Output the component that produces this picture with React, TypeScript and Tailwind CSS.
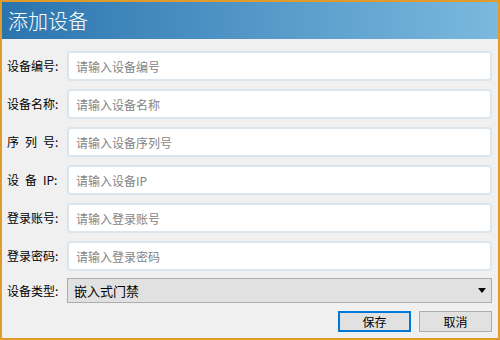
const fields = [
  { label: "设备编号:", placeholder: "请输入设备编号" },
  { label: "设备名称:", placeholder: "请输入设备名称" },
  { label: "序\u2002列\u2002号:", placeholder: "请输入设备序列号" },
  { label: "设\u2002备\u2002IP:", placeholder: "请输入设备IP" },
  { label: "登录账号:", placeholder: "请输入登录账号" },
  { label: "登录密码:", placeholder: "请输入登录密码" },
];

const font = { fontFamily: '"Noto Sans CJK SC", "Liberation Sans", sans-serif' };

export default function App() {
  return (
    <div
      className="w-[500px] h-[340px] border-2 border-[#e09b2a] bg-[#f0f0f0] flex flex-col text-[12px] text-black"
      style={font}
    >
      <div className="h-[37px] shrink-0 bg-gradient-to-r from-[#2a74ae] via-[#5a9ecc] via-60% to-[#7bb9de] flex items-center px-[6px]">
        <span className="text-white text-[20px] font-light leading-none">添加设备</span>
      </div>

      <div className="flex flex-col pl-[5px] pr-[6px] pt-[12px]">
        {fields.map((f) => (
          <div key={f.label} className="flex items-center h-[30px] mb-[8px]">
            <label className="w-[60px] shrink-0 whitespace-pre">{f.label}</label>
            <input
              className="flex-1 h-[30px] rounded-[4px] border-2 border-[#dbe5ee] bg-white px-[7px] outline-none text-[12px] placeholder:text-[#858585]"
              placeholder={f.placeholder}
            />
          </div>
        ))}

        <div className="flex items-center h-[25px] -mt-[1px]">
          <label className="w-[60px] shrink-0">设备类型:</label>
          <div className="flex-1 h-[25px] border border-[#adadad] bg-[#e1e1e1] flex items-center justify-between pl-[6px] pr-[5px]">
            <span className="text-[13px]">嵌入式门禁</span>
            <svg width="8" height="5" viewBox="0 0 8 5">
              <path d="M0 0h8L4 5z" fill="#000" />
            </svg>
          </div>
        </div>

        <div className="flex justify-end gap-[8px] mt-[8px]">
          <button className="w-[73px] h-[21px] border-2 border-[#0078d7] bg-[#e1e1e1] text-[12px] leading-none">
            保存
          </button>
          <button className="w-[73px] h-[21px] border border-[#adadad] bg-[#e1e1e1] text-[12px] leading-none">
            取消
          </button>
        </div>
      </div>
    </div>
  );
}
